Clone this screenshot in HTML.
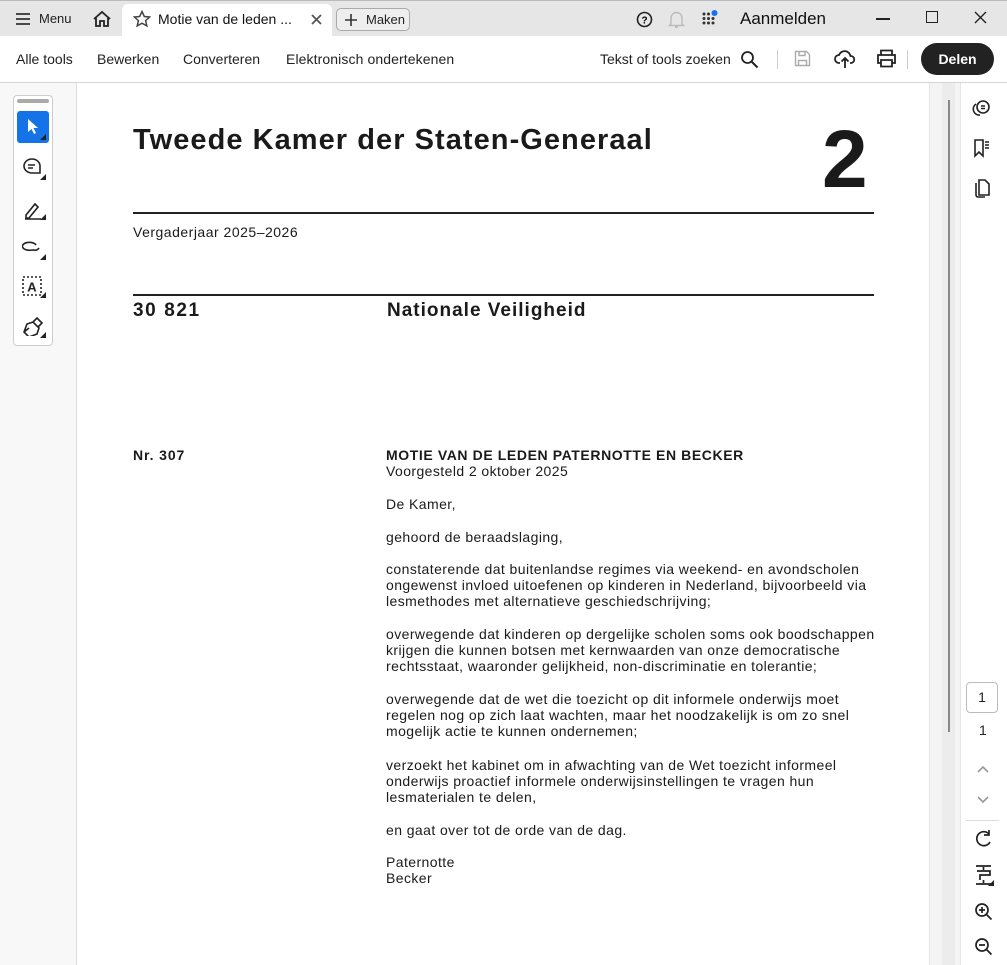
<!DOCTYPE html>
<html><head><meta charset="utf-8"><style>
*{margin:0;padding:0;box-sizing:border-box}
body{width:1007px;height:965px;overflow:hidden;font-family:"Liberation Sans",Arial,sans-serif;background:#f8f8f8;position:relative;color:#222}
.abs{position:absolute}
#title{left:0;top:0;width:1007px;height:36px;background:#e6e6e6;border-top:1px solid #bbb}
#tb{left:0;top:36px;width:1007px;height:47px;background:#fff;border-bottom:1px solid #d6d6d6}
.t{position:absolute;font-size:14px;color:#222;white-space:nowrap}
#page{left:76px;top:83px;width:853px;height:882px;background:#fff;border-left:1px solid #ddd}
.p{position:absolute;left:386px;font-size:14px;line-height:16px;color:#1a1a1a;width:540px;letter-spacing:0.42px;white-space:nowrap}
svg{position:absolute}
</style></head><body>
<div id="title" class="abs">
 <div class="abs" style="left:122px;top:3px;width:210px;height:33px;background:#fff;border-radius:6px 6px 0 0"></div>
 <svg style="left:15px;top:11px" width="16" height="14"><path d="M1 2h14M1 7h14M1 12h14" stroke="#333" stroke-width="1.8"/></svg>
 <div class="t" style="left:39px;top:10px;font-size:13px">Menu</div>
 <svg style="left:92px;top:9px" width="20" height="18"><path d="M2 9L10 2l8 7M4 8v8h4v-5h4v5h4V8" fill="none" stroke="#222" stroke-width="1.8"/></svg>
 <svg style="left:133px;top:9px" width="18" height="18"><path d="M9 1.5l2.3 5 5.3.5-4 3.6 1.2 5.3L9 13.2l-4.8 2.7 1.2-5.3-4-3.6 5.3-.5z" fill="none" stroke="#444" stroke-width="1.5"/></svg>
 <div class="t" style="left:158px;top:10px;font-size:14px;color:#111">Motie van de leden ...</div>
 <svg style="left:311px;top:13px" width="11" height="11"><path d="M1 1l9 9M10 1l-9 9" stroke="#555" stroke-width="1.8"/></svg>
 <div class="abs" style="left:336px;top:7px;width:74px;height:23px;border:1px solid #aaa;border-radius:5px;background:#eee"></div>
 <svg style="left:345px;top:13px" width="12" height="12"><path d="M6 0v12M0 6h12" stroke="#333" stroke-width="1.6"/></svg>
 <div class="t" style="left:366px;top:11px;font-size:13px">Maken</div>
 <svg style="left:636px;top:10px" width="17" height="17"><circle cx="8.5" cy="8.5" r="7" fill="none" stroke="#222" stroke-width="1.6"/><text x="8.5" y="12.5" font-size="10" font-weight="bold" text-anchor="middle" font-family="Liberation Sans">?</text></svg>
 <svg style="left:668px;top:9px" width="17" height="19"><path d="M3 14V8a5.5 5.5 0 0111 0v6l1.5 1.5h-14zM7 17h3" fill="none" stroke="#bbb" stroke-width="1.4"/></svg>
 <svg style="left:701px;top:8px" width="18" height="20"><g fill="#333"><circle cx="3" cy="5" r="1.5"/><circle cx="7.5" cy="5" r="1.5"/><circle cx="3" cy="9.5" r="1.5"/><circle cx="7.5" cy="9.5" r="1.5"/><circle cx="12" cy="9.5" r="1.5"/><circle cx="3" cy="14" r="1.5"/><circle cx="7.5" cy="14" r="1.5"/><circle cx="12" cy="14" r="1.5"/></g><circle cx="13.5" cy="4" r="3" fill="#1473e6"/></svg>
 <div class="t" style="left:740px;top:8px;font-size:17px;color:#111">Aanmelden</div>
 <div class="abs" style="left:876px;top:17px;width:14px;height:1.5px;background:#222"></div>
 <div class="abs" style="left:926px;top:10px;width:12px;height:12px;border:1.3px solid #222"></div>
 <svg style="left:974px;top:10px" width="13" height="13"><path d="M1 1l11 11M12 1L1 12" stroke="#222" stroke-width="1.4"/></svg>
</div>
<div id="tb" class="abs">
 <div class="t" style="left:16px;top:15px">Alle tools</div>
 <div class="t" style="left:97px;top:15px">Bewerken</div>
 <div class="t" style="left:183px;top:15px">Converteren</div>
 <div class="t" style="left:286px;top:15px;letter-spacing:0.1px">Elektronisch ondertekenen</div>
 <div class="t" style="left:600px;top:15px">Tekst of tools zoeken</div>
 <svg style="left:740px;top:14px" width="19" height="19"><circle cx="7.5" cy="7.5" r="5.5" fill="none" stroke="#222" stroke-width="1.8"/><path d="M11.5 11.5l6 6" stroke="#222" stroke-width="2"/></svg>
 <div class="abs" style="left:777px;top:14px;width:1px;height:19px;background:#ccc"></div>
 <svg style="left:794px;top:14px" width="17" height="17"><path d="M1.5 1.5h11l3 3v11h-14z M5 1.5v4h6v-4M4.5 15.5v-5h8v5" fill="none" stroke="#aaa" stroke-width="1.4"/></svg>
 <svg style="left:834px;top:13px" width="22" height="20"><path d="M6 14H5a4 4 0 010-8 6 6 0 0111.5 1A3.5 3.5 0 0117 14h-1M11 19V9M7.5 12.5L11 9l3.5 3.5" fill="none" stroke="#222" stroke-width="1.8"/></svg>
 <svg style="left:876px;top:13px" width="21" height="19"><path d="M5 6V1.5h11V6M5 14H2V6h17v8h-3M5 11h11v6.5H5z" fill="none" stroke="#222" stroke-width="1.8"/></svg>
 <div class="abs" style="left:907px;top:14px;width:1px;height:19px;background:#ccc"></div>
 <div class="abs" style="left:921px;top:7px;width:73px;height:32px;border-radius:16px;background:#222;color:#fff;font-weight:bold;font-size:14px;text-align:center;line-height:32px">Delen</div>
</div>
<!-- left toolbar -->
<div class="abs" style="left:13px;top:95px;width:40px;height:251px;border:1px solid #ccc;border-radius:4px;background:#fff"></div>
<div class="abs" style="left:17px;top:99px;width:32px;height:4px;border-radius:2px;background:#aaa"></div>
<div class="abs" style="left:17px;top:111px;width:32px;height:32px;border-radius:3px;background:#1473e6"></div>
<svg style="left:27px;top:118px" width="14" height="18"><path d="M1 1v13l3.5-3 2.5 5 2-1-2.5-5H11z" fill="#fff"/></svg>
<svg style="left:22px;top:157px" width="26" height="110" fill="none" stroke="#222" stroke-width="1.6">
 <path d="M10 2a8 7 0 100 14h8v-7a8 7 0 00-8-7zM6 8h7M6 11h5"/>
 <path d="M4 58l9-11 3 3-9 11H4zM3 62h16" />
 <path d="M14 88a7 4 0 10-4 5c3 0 5 1 7 -2" />
</svg>
<svg style="left:22px;top:276px" width="24" height="24"><path d="M1 1h18v18H1z" fill="none" stroke="#222" stroke-width="1.6" stroke-dasharray="2 2"/><text x="10" y="15.5" font-size="13" font-weight="bold" text-anchor="middle" font-family="Liberation Sans" fill="#222">A</text></svg>
<svg style="left:22px;top:316px" width="22" height="20"><path d="M2 16l3-8 6-2 6 6-2 6-8 3zM11 6l4-4 5 5-4 4M2 16l5-4" fill="none" stroke="#222" stroke-width="1.6"/></svg>
<svg style="left:40px;top:134px" width="8" height="205" fill="#222"><path d="M6 0v6H0zM6 40v6H0zM6 80v6H0zM6 120v6H0zM6 158v6H0zM6 198v6H0z"/></svg>
<!-- page -->
<div id="page" class="abs">
 <div class="abs" style="left:56px;top:41px;font-size:29px;font-weight:bold;color:#1a1a1a;letter-spacing:1.05px;white-space:nowrap">Tweede Kamer der Staten-Generaal</div>
 <div class="abs" style="left:745px;top:36px;font-size:82px;font-weight:bold;color:#1a1a1a;line-height:82px">2</div>
 <div class="abs" style="left:56px;top:129px;width:741px;height:1.5px;background:#222"></div>
 <div class="abs" style="left:56px;top:141px;font-size:14px;color:#1a1a1a;letter-spacing:0.5px">Vergaderjaar 2025–2026</div>
 <div class="abs" style="left:56px;top:211px;width:741px;height:1.5px;background:#222"></div>
 <div class="abs" style="left:56px;top:217px;font-size:19px;font-weight:bold;color:#1a1a1a;letter-spacing:1.6px">30 821</div>
 <div class="abs" style="left:310px;top:217px;font-size:19px;font-weight:bold;color:#1a1a1a;letter-spacing:1px">Nationale Veiligheid</div>
 <div class="abs" style="left:56px;top:364px;font-size:14px;font-weight:bold;color:#1a1a1a;letter-spacing:0.9px">Nr. 307</div>
</div>
<div class="p" style="top:447px;font-weight:bold;letter-spacing:0.6px">MOTIE VAN DE LEDEN PATERNOTTE EN BECKER</div>
<div class="p" style="top:463px">Voorgesteld 2 oktober 2025</div>
<div class="p" style="top:496px">De Kamer,</div>
<div class="p" style="top:529px">gehoord de beraadslaging,</div>
<div class="p" style="top:561px">constaterende dat buitenlandse regimes via weekend- en avondscholen<br>ongewenst invloed uitoefenen op kinderen in Nederland, bijvoorbeeld via<br>lesmethodes met alternatieve geschiedschrijving;</div>
<div class="p" style="top:626px">overwegende dat kinderen op dergelijke scholen soms ook boodschappen<br>krijgen die kunnen botsen met kernwaarden van onze democratische<br>rechtsstaat, waaronder gelijkheid, non-discriminatie en tolerantie;</div>
<div class="p" style="top:691px">overwegende dat de wet die toezicht op dit informele onderwijs moet<br>regelen nog op zich laat wachten, maar het noodzakelijk is om zo snel<br>mogelijk actie te kunnen ondernemen;</div>
<div class="p" style="top:757px">verzoekt het kabinet om in afwachting van de Wet toezicht informeel<br>onderwijs proactief informele onderwijsinstellingen te vragen hun<br>lesmaterialen te delen,</div>
<div class="p" style="top:822px">en gaat over tot de orde van de dag.</div>
<div class="p" style="top:854px">Paternotte<br>Becker</div>
<!-- scrollbar -->
<div class="abs" style="left:929px;top:83px;width:31px;height:882px;background:#f4f4f4;border-left:1px solid #e4e4e4"></div>
<div class="abs" style="left:942px;top:83px;width:13px;height:882px;background:#ececec"></div>
<div class="abs" style="left:948px;top:100px;width:2px;height:632px;background:#888"></div>
<div class="abs" style="left:960px;top:83px;width:47px;height:882px;background:#fff;border-left:1px solid #e4e4e4"></div>
<svg style="left:972px;top:99px" width="20" height="100" fill="none" stroke="#222" stroke-width="1.6">
 <circle cx="11" cy="8" r="6"/><path d="M4 5a6 6 0 004 11M9 7h4M9 9.5h4"/>
 <path d="M3 41h8v16l-4-4-4 4zM13 43h4M13 46h4M13 49h4"/>
 <path d="M7 81h6l4 4v11H7zM4 84v12a2 2 0 002 2h7"/>
</svg>
<div class="abs" style="left:966px;top:682px;width:32px;height:31px;border:1px solid #bbb;border-radius:4px;text-align:center;line-height:29px;font-size:14px">1</div>
<div class="t" style="left:979px;top:722px">1</div>
<svg style="left:976px;top:763px" width="14" height="42" fill="none" stroke="#999" stroke-width="1.6"><path d="M2 9l5-5 5 5M2 34l5 5 5-5"/></svg>
<div class="abs" style="left:966px;top:820px;width:33px;height:1px;background:#ddd"></div>
<svg style="left:974px;top:829px" width="20" height="130" fill="none" stroke="#222" stroke-width="1.7">
 <path d="M15 5A7 7 0 1016 13M15 1v5h-5"/>
 <path d="M2 37h15M2 55h15M9.5 38v3M9.5 54v-3M3 42h13v4H6v5"/>
 <circle cx="8" cy="81" r="6"/><path d="M12.5 85.5l5 5M5 81h6M8 78v6"/>
 <circle cx="8" cy="116" r="6"/><path d="M12.5 120.5l5 5M5 116h6"/>
</svg>
<svg style="left:988px;top:880px" width="6" height="6"><path d="M6 0v6H0z" fill="#222"/></svg>
</body></html>
